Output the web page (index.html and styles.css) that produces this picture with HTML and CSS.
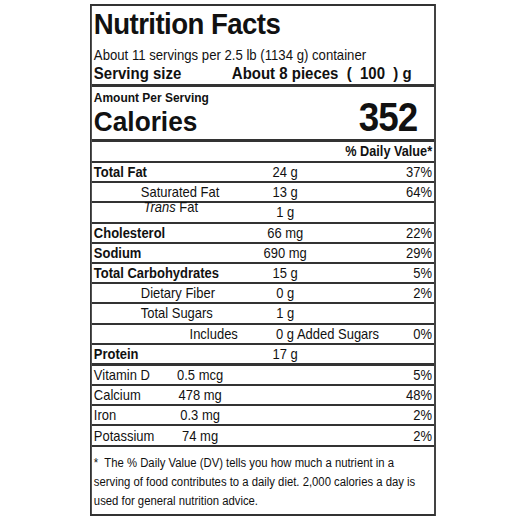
FILE: index.html
```html
<!DOCTYPE html>
<html lang="en">
<head>
<meta charset="utf-8">
<title>Nutrition Facts</title>
<link rel="stylesheet" href="styles.css">
</head>
<body>
<div class="label">
  <div class="head">
    <div class="title">Nutrition Facts</div>
    <div class="servings">About 11 servings per 2.5 lb (1134 g) container</div>
    <div class="size"><span class="size-label">Serving size</span><span>About 8 pieces &nbsp;( &nbsp;100 &nbsp;) g</span></div>
  </div>
  <div class="cal">
    <div class="amount-per">Amount Per Serving</div>
    <div class="cal-row"><span class="cal-label">Calories</span><span class="cal-value">352</span></div>
  </div>
  <div class="dv-head">% Daily Value*</div>

  <div class="row"><span class="name b">Total Fat</span><span class="amt">24 g</span><span class="pct">37%</span></div>
  <div class="row"><span class="name ind">Saturated Fat</span><span class="amt">13 g</span><span class="pct">64%</span></div>
  <div class="row"><span class="name ind2"><i>Trans</i> Fat</span><span class="amt">1 g</span><span class="pct"></span></div>
  <div class="row"><span class="name b">Cholesterol</span><span class="amt">66 mg</span><span class="pct">22%</span></div>
  <div class="row"><span class="name b">Sodium</span><span class="amt">690 mg</span><span class="pct">29%</span></div>
  <div class="row"><span class="name b">Total Carbohydrates</span><span class="amt">15 g</span><span class="pct">5%</span></div>
  <div class="row"><span class="name ind">Dietary Fiber</span><span class="amt">0 g</span><span class="pct">2%</span></div>
  <div class="row"><span class="name ind">Total Sugars</span><span class="amt">1 g</span><span class="pct"></span></div>
  <div class="row"><span class="name ind3">Includes</span><span class="amt added">0 g Added Sugars</span><span class="pct">0%</span></div>
  <div class="row thick"><span class="name b">Protein</span><span class="amt">17 g</span><span class="pct"></span></div>

  <div class="vrow"><span class="vname">Vitamin D</span><span class="vamt">0.5 mcg</span><span class="pct">5%</span></div>
  <div class="vrow"><span class="vname">Calcium</span><span class="vamt">478 mg</span><span class="pct">48%</span></div>
  <div class="vrow"><span class="vname">Iron</span><span class="vamt">0.3 mg</span><span class="pct">2%</span></div>
  <div class="vrow"><span class="vname">Potassium</span><span class="vamt">74 mg</span><span class="pct">2%</span></div>

  <div class="foot">*&nbsp; The % Daily Value (DV) tells you how much a nutrient in a<br>serving of food contributes to a daily diet. 2,000 calories a day is<br>used for general nutrition advice.</div>
</div>
</body>
</html>
```
FILE: styles.css
```css
html, body {
  margin: 0;
  padding: 0;
  background: #ffffff;
}

/* The printed label is set in a horizontally condensed Arial:
   lay it out wide and condense it as a whole. */
.label {
  margin: 4px 0 0 90px;
  width: 376px;
  height: 512px;
  box-sizing: border-box;
  border: 2px solid #333;
  font-family: "Liberation Sans", Arial, sans-serif;
  color: #111;
  transform: scaleX(0.92);
  transform-origin: 0 0;
}

.head {
  padding: 3px 2.2px 1px;
  border-bottom: 3px solid #333;
}

.title {
  font-size: 30px;
  font-weight: bold;
  letter-spacing: -0.6px;
  line-height: 30px;
}

.servings {
  font-size: 14.3px;
  line-height: 16px;
  padding-top: 8px;
}

.size {
  display: flex;
  font-size: 16.3px;
  font-weight: bold;
  line-height: 20px;
}

.size-label {
  width: 150px;
}

.cal {
  padding: 4px 2.2px 0;
  border-bottom: 3px solid #333;
}

.amount-per {
  font-size: 13px;
  font-weight: bold;
  line-height: 13px;
}

.cal-row {
  display: flex;
  justify-content: space-between;
  align-items: baseline;
  height: 35px;
  line-height: 26px;
  padding-right: 16px;
}

.cal-label {
  font-size: 28.5px;
  font-weight: bold;
}

.cal-value {
  font-size: 40px;
  font-weight: bold;
  letter-spacing: -1px;
}

.dv-head {
  font-size: 13.8px;
  font-weight: bold;
  text-align: right;
  line-height: 19px;
  padding: 0 2.2px;
  border-bottom: 2px solid #333;
}

.row, .vrow {
  display: grid;
  align-items: center;
  height: 20.2px;
  box-sizing: border-box;
  border-bottom: 2px solid #333;
  padding: 0 2.2px;
  font-size: 14.1px;
}

.row {
  grid-template-columns: 170px 76px 1fr auto;
}

.row.thick {
  height: 21.2px;
  border-bottom-width: 3px;
}

.vrow {
  grid-template-columns: 72px 87px 1fr auto;
}

.name,
.vname {
  grid-column: 1;
}

.b {
  font-weight: bold;
}

.ind {
  padding-left: 51px;
}

.ind2 {
  padding-left: 54px;
  align-self: start;
  line-height: 8px;
}

.ind3 {
  padding-left: 104px;
}

.amt,
.vamt {
  grid-column: 2;
  text-align: center;
}

.amt.added {
  grid-column: 2 / 4;
  text-align: left;
  padding-left: 28px;
}

.pct {
  grid-column: 4;
  text-align: right;
}

.foot {
  font-size: 12.3px;
  line-height: 19px;
  padding: 7px 2.2px 0;
}
```
